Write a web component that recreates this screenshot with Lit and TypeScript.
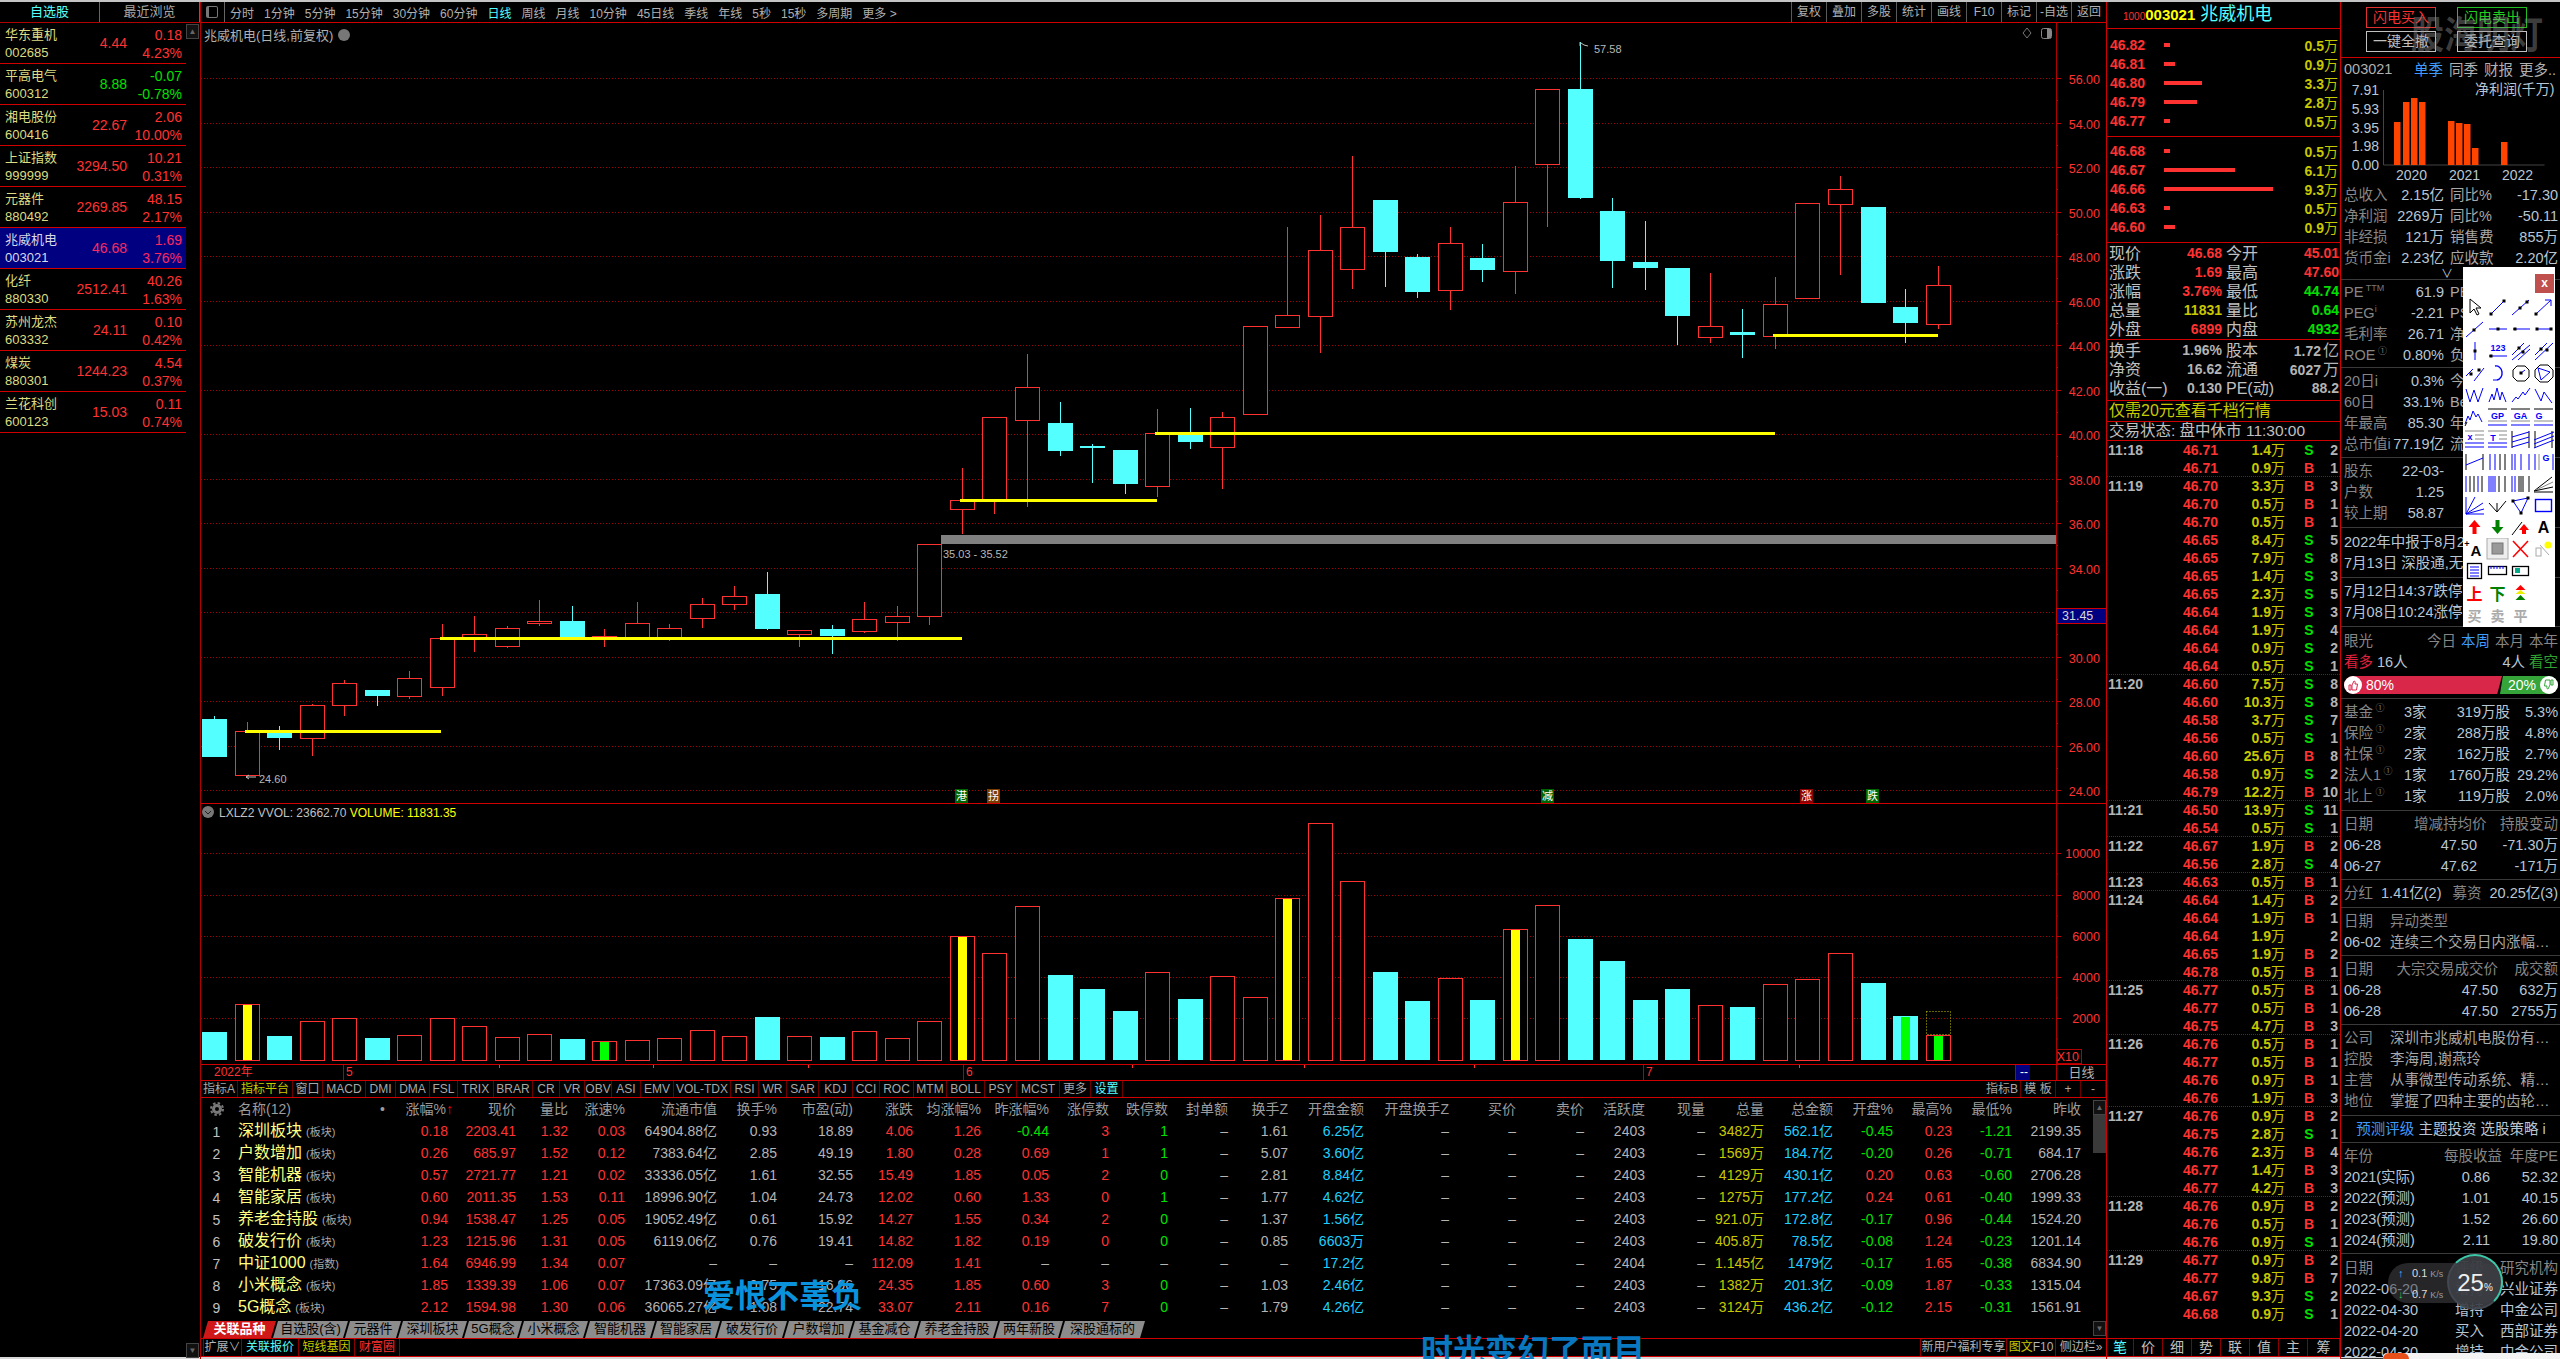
import { LitElement, html, css, svg } from "lit";
import { customElement } from "lit/decorators.js";

const RED = "#ff3232";
const CYAN = "#54ffff";

// kind, body top, body bottom, wick top, wick bottom (page pixels)
type Candle = ["r" | "c", number, number, number, number];
const candles: Candle[] = [
  ["c", 719, 757, 716, 757], ["r", 731, 775, 722, 775], ["c", 733, 738, 726, 750], ["r", 705, 738, 704, 756],
  ["r", 683, 705, 680, 716], ["c", 690, 696, 690, 706], ["r", 678, 696, 671, 699], ["r", 638, 687, 624, 696],
  ["r", 634, 638, 616, 652], ["r", 628, 646, 626, 648], ["r", 621, 623, 600, 626], ["c", 621, 638, 606, 638],
  ["r", 636, 638, 629, 647], ["r", 623, 637, 602, 637], ["r", 628, 637, 624, 641], ["r", 604, 618, 598, 628],
  ["r", 596, 604, 586, 610], ["c", 594, 629, 572, 630], ["r", 630, 634, 630, 647], ["c", 629, 636, 625, 654],
  ["r", 619, 631, 602, 633], ["r", 616, 622, 606, 641], ["r", 544, 616, 544, 625], ["r", 500, 509, 468, 534],
  ["r", 417, 500, 417, 514], ["r", 387, 420, 354, 507], ["c", 423, 451, 402, 456], ["c", 446, 447, 444, 483],
  ["c", 450, 484, 450, 494], ["r", 433, 486, 409, 497], ["c", 433, 442, 408, 449], ["r", 417, 447, 412, 489],
  ["r", 326, 414, 326, 414], ["r", 315, 327, 227, 327], ["r", 250, 316, 215, 353], ["r", 227, 269, 156, 289],
  ["c", 200, 252, 200, 287], ["c", 257, 292, 254, 298], ["r", 243, 290, 227, 310], ["c", 258, 270, 244, 282],
  ["r", 202, 271, 166, 294], ["r", 89, 164, 89, 227], ["c", 89, 198, 42, 199], ["c", 211, 261, 198, 288],
  ["c", 262, 268, 221, 290], ["c", 268, 316, 268, 345], ["r", 326, 337, 273, 343], ["c", 332, 335, 309, 358],
  ["r", 304, 336, 277, 349], ["r", 203, 298, 203, 298], ["r", 189, 204, 176, 275], ["c", 207, 303, 207, 303],
  ["c", 307, 323, 289, 343], ["r", 285, 324, 266, 329],
];

// top of each volume bar, same order as the candles
const volTops = [
  1032, 1004, 1036, 1021, 1018, 1038, 1035, 1018, 1026, 1037, 1034, 1039, 1041, 1040, 1038, 1030, 1036, 1017,
  1036, 1037, 1031, 1038, 1021, 936, 953, 906, 975, 989, 1011, 972, 999, 976, 997, 898, 823, 881, 972, 1001,
  978, 1000, 929, 905, 939, 961, 1000, 989, 1005, 1007, 984, 979, 953, 983, 1016, 1035,
];
const volStripe: Record<number, string> = { 1: "#ffff00", 12: "#00ff00", 23: "#ffff00", 33: "#ffff00", 40: "#ffff00", 52: "#00ff00", 53: "#00ff00" };

const yellowLines = [
  [245, 441, 731], [440, 962, 638], [960, 1157, 500], [1155, 1775, 433], [1773, 1938, 335],
];
const prices = [56, 54, 52, 50, 48, 46, 44, 42, 40, 38, 36, 34, 32, 30, 28, 26, 24];
const priceY = (p: number) => Math.round(78 + (56 - p) * 22.25) + 0.5;
const barX = (i: number) => Math.round(202 + 32.52 * i);

const chartSvg = svg`
  ${prices.map((p) => svg`
    <line class="grid" x1="201" x2="2055" y1=${priceY(p)} y2=${priceY(p)}></line>
    <line class="tick" x1="2056" x2="2061" y1=${priceY(p)} y2=${priceY(p)}></line>
    <line class="tick" x1="2056" x2="2058" y1=${priceY(p) + 22} y2=${priceY(p) + 22}></line>
    ${p === 32 ? "" : svg`<text class="ax" x="2100" y=${priceY(p) + 5}>${p}.00</text>`}`)}
  <rect x="941" y="535" width="1115" height="9" fill="#808080"></rect>
  ${candles.map(([k, t, b, wt, wb], i) => {
    const x = barX(i);
    const cx = x + 12.5;
    const col = k === "r" ? RED : CYAN;
    return svg`
      <line x1=${cx} x2=${cx} y1=${wt} y2=${wb} stroke=${col}></line>
      ${k === "r"
        ? svg`<rect x=${x + 0.5} y=${t + 0.5} width="24" height=${b - t} fill="#000" stroke=${RED}></rect>`
        : svg`<rect x=${x} y=${t} width="25" height=${Math.max(b - t, 2)} fill=${CYAN}></rect>`}`;
  })}
  ${yellowLines.map(([a, b, y]) => svg`<rect x=${a} y=${y - 1} width=${b - a} height="3" fill="#ffff00"></rect>`)}
  <text class="note" x="943" y="558">35.03 - 35.52</text>
  <text class="note" x="1594" y="53">57.58</text>
  <path d="M1580 42v4M1581 43l3 2 4 1" stroke="#c0c0c0" fill="none"></path>
  <text class="note" x="259" y="783">24.60</text>
  <path d="M256 777h-10M246 777l3-2M246 777l3 2" stroke="#c0c0c0" fill="none"></path>
  ${([[955, "港", "#006400"], [987, "拐", "#7a3c00"], [1541, "减", "#006400"], [1800, "涨", "#8b0000"], [1866, "跌", "#006400"]] as [number, string, string][]).map(
    ([x, t, c]) => svg`<rect x=${x} y="789" width="13" height="14" fill=${c}></rect><text class="tag" x=${x + 6.5} y="800">${t}</text>`
  )}`;

const volSvg = svg`
  ${[853, 895, 936, 977, 1018].map((y, i) => svg`
    <line class="grid" x1="201" x2="2055" y1=${y + 0.5} y2=${y + 0.5}></line>
    <line class="tick" x1="2056" x2="2061" y1=${y + 0.5} y2=${y + 0.5}></line>
    <line class="tick" x1="2056" x2="2058" y1=${y + 21} y2=${y + 21}></line>
    <text class="ax" x="2100" y=${y + 5}>${10000 - i * 2000}</text>`)}
  ${volTops.map((t, i) => {
    const x = barX(i);
    const h = 1060 - t;
    const stripe = volStripe[i];
    return svg`
      ${candles[i][0] === "c"
        ? svg`<rect x=${x} y=${t} width="25" height=${h} fill=${CYAN}></rect>`
        : svg`<rect x=${x + 0.5} y=${t + 0.5} width="24" height=${h} fill="#000" stroke=${RED}></rect>`}
      ${stripe ? svg`<rect x=${x + 8} y=${t + 1} width="9" height=${h - 1} fill=${stripe}></rect>` : ""}`;
  })}
  <rect x=${barX(53) + 0.5} y="1011.5" width="24" height="23" fill="none" stroke="#c8c800" stroke-dasharray="1 2"></rect>
  <circle cx="208" cy="812" r="6" fill="#777"></circle>
  <path d="M205 811l3 3 3-3" stroke="#222" fill="none"></path>
  <text class="lab" x="219" y="817"><tspan fill="#c0c0c0">LXLZ2 VVOL: 23662.70 </tspan><tspan fill="#ffff00">VOLUME: 11831.35</tspan></text>
  <rect x="2057.5" y="1049.5" width="24" height="14" fill="none" stroke="#b00000"></rect>
  <text class="ax" x="2079" y="1061">X10</text>`;

const sideRows = [
  ["华东重机", "002685", "4.44", "0.18", "4.23%", "r"],
  ["平高电气", "600312", "8.88", "-0.07", "-0.78%", "g"],
  ["湘电股份", "600416", "22.67", "2.06", "10.00%", "r"],
  ["上证指数", "999999", "3294.50", "10.21", "0.31%", "r"],
  ["元器件", "880492", "2269.85", "48.15", "2.17%", "r"],
  ["兆威机电", "003021", "46.68", "1.69", "3.76%", "s"],
  ["化纤", "880330", "2512.41", "40.26", "1.63%", "r"],
  ["苏州龙杰", "603332", "24.11", "0.10", "0.42%", "r"],
  ["煤炭", "880301", "1244.23", "4.54", "0.37%", "r"],
  ["兰花科创", "600123", "15.03", "0.11", "0.74%", "r"],
];

const periods = ["分时", "1分钟", "5分钟", "15分钟", "30分钟", "60分钟", "日线", "周线", "月线", "10分钟", "45日线", "季线", "年线", "5秒", "15秒", "多周期", "更多 >"];
const tools = ["复权", "叠加", "多股", "统计", "画线", "F10", "标记", "-自选", "返回"];
const indicators: [string, number, string?][] = [
  ["指标A", 37], ["指标平台", 55, "y"], ["窗口", 30], ["MACD", 43], ["DMI", 30], ["DMA", 34], ["FSL", 28], ["TRIX", 36], ["BRAR", 39],
  ["CR", 27], ["VR", 25], ["OBV", 27], ["ASI", 29], ["EMV", 33], ["VOL-TDX", 57], ["RSI", 28], ["WR", 28], ["SAR", 32], ["KDJ", 34],
  ["CCI", 27], ["ROC", 34], ["MTM", 33], ["BOLL", 38], ["PSY", 32], ["MCST", 43], ["更多", 31], ["设置", 32, "cy"],
];
const indRight: [string, number][] = [["指标B", 37], ["模 板", 35], ["+", 25], ["-", 25]];
const relTabs: [string, number][] = [
  ["自选股(含)", 75], ["元器件", 56], ["深圳板块", 69], ["5G概念", 58], ["小米概念", 69], ["智能机器", 70], ["智能家居", 68], ["破发行价", 70],
  ["户数增加", 69], ["基金减仓", 69], ["养老金持股", 82], ["两年新股", 68], ["深股通标的", 85],
];

const headers = ["涨幅%", "现价", "量比", "涨速%", "流通市值", "换手%", "市盈(动)", "涨跌", "均涨幅%", "昨涨幅%", "涨停数", "跌停数", "封单额", "换手Z", "开盘金额", "开盘换手Z", "买价", "卖价", "活跃度", "现量", "总量", "总金额", "开盘%", "最高%", "最低%", "昨收"];
// colour per column: s = by sign (red/green), r = red, w = grey, g = green, c = cyan, y = yellow
const colKind = "srsswwwsssrgwwcwwwwwycsssw";
const stockRows: [string, string, string[]][] = [
  ["深圳板块", "(板块)", "0.18 2203.41 1.32 0.03 64904.88亿 0.93 18.89 4.06 1.26 -0.44 3 1 - 1.61 6.25亿 - - - 2403 - 3482万 562.1亿 -0.45 0.23 -1.21 2199.35".split(" ")],
  ["户数增加", "(板块)", "0.26 685.97 1.52 0.12 7383.64亿 2.85 49.19 1.80 0.28 0.69 1 1 - 5.07 3.60亿 - - - 2403 - 1569万 184.7亿 -0.20 0.26 -0.71 684.17".split(" ")],
  ["智能机器", "(板块)", "0.57 2721.77 1.21 0.02 33336.05亿 1.61 32.55 15.49 1.85 0.05 2 0 - 2.81 8.84亿 - - - 2403 - 4129万 430.1亿 0.20 0.63 -0.60 2706.28".split(" ")],
  ["智能家居", "(板块)", "0.60 2011.35 1.53 0.11 18996.90亿 1.04 24.73 12.02 0.60 1.33 0 1 - 1.77 4.62亿 - - - 2403 - 1275万 177.2亿 0.24 0.61 -0.40 1999.33".split(" ")],
  ["养老金持股", "(板块)", "0.94 1538.47 1.25 0.05 19052.49亿 0.61 15.92 14.27 1.55 0.34 2 0 - 1.37 1.56亿 - - - 2403 - 921.0万 172.8亿 -0.17 0.96 -0.44 1524.20".split(" ")],
  ["破发行价", "(板块)", "1.23 1215.96 1.31 0.05 6119.06亿 0.76 19.41 14.82 1.82 0.19 0 0 - 0.85 6603万 - - - 2403 - 405.8万 78.5亿 -0.08 1.24 -0.23 1201.14".split(" ")],
  ["中证1000", "(指数)", "1.64 6946.99 1.34 0.07 - - - 112.09 1.41 - - - - - 17.2亿 - - - 2404 - 1.145亿 1479亿 -0.17 1.65 -0.38 6834.90".split(" ")],
  ["小米概念", "(板块)", "1.85 1339.39 1.06 0.07 17363.09亿 0.75 16.96 24.35 1.85 0.60 3 0 - 1.03 2.46亿 - - - 2403 - 1382万 201.3亿 -0.09 1.87 -0.33 1315.04".split(" ")],
  ["5G概念", "(板块)", "2.12 1594.98 1.30 0.06 36065.27亿 1.08 22.74 33.07 2.11 0.16 7 0 - 1.79 4.26亿 - - - 2403 - 3124万 436.2亿 -0.12 2.15 -0.31 1561.91".split(" ")],
];

const asks = [["46.82", 6, "0.5万"], ["46.81", 11, "0.9万"], ["46.80", 38, "3.3万"], ["46.79", 33, "2.8万"], ["46.77", 6, "0.5万"]] as [string, number, string][];
const bids = [["46.68", 6, "0.5万"], ["46.67", 71, "6.1万"], ["46.66", 109, "9.3万"], ["46.63", 6, "0.5万"], ["46.60", 11, "0.9万"]] as [string, number, string][];
const quotes = [
  ["现价", "46.68", "r", "今开", "45.01", "r"],
  ["涨跌", "1.69", "r", "最高", "47.60", "r"],
  ["涨幅", "3.76%", "r", "最低", "44.74", "g"],
  ["总量", "11831", "y", "量比", "0.64", "g"],
  ["外盘", "6899", "r", "内盘", "4932", "g"],
];
const capital = [
  ["换手", "1.96%", "w", "股本", "1.72亿", "w"],
  ["净资", "16.62", "w", "流通", "6027万", "w"],
  ["收益(一)", "0.130", "w", "PE(动)", "88.2", "w"],
];

// time|price|vol|side|count, "." ends a minute with a dotted rule
const ticks = `11:18 46.71 1.4 S 2,- 46.71 0.9 B 1 .,11:19 46.70 3.3 B 3,- 46.70 0.5 B 1,- 46.70 0.5 B 1,- 46.65 8.4 S 5,- 46.65 7.9 S 8,- 46.65 1.4 S 3,- 46.65 2.3 S 5,- 46.64 1.9 S 3,- 46.64 1.9 S 4,- 46.64 0.9 S 2,- 46.64 0.5 S 1 .,11:20 46.60 7.5 S 8,- 46.60 10.3 S 8,- 46.58 3.7 S 7,- 46.56 0.5 S 1,- 46.60 25.6 B 8,- 46.58 0.9 S 2,- 46.79 12.2 B 10 .,11:21 46.50 13.9 S 11,- 46.54 0.5 S 1 .,11:22 46.67 1.9 B 2,- 46.56 2.8 S 4 .,11:23 46.63 0.5 B 1 .,11:24 46.64 1.4 B 2,- 46.64 1.9 B 1,- 46.64 1.9 _ 2,- 46.65 1.9 B 2,- 46.78 0.5 B 1 .,11:25 46.77 0.5 B 1,- 46.77 0.5 B 1,- 46.75 4.7 B 3 .,11:26 46.76 0.5 B 1,- 46.77 0.5 B 1,- 46.76 0.9 B 1,- 46.76 1.9 B 3 .,11:27 46.76 0.9 B 2,- 46.75 2.8 S 1,- 46.76 2.3 B 4,- 46.77 1.4 B 3,- 46.77 4.2 B 3 .,11:28 46.76 0.9 B 2,- 46.76 0.5 B 1,- 46.76 0.9 S 1 .,11:29 46.77 0.9 B 2,- 46.77 9.8 B 7,- 46.67 9.3 S 2,- 46.68 0.9 S 1`
  .split(",")
  .map((r) => r.split(" "));

// drawing toolbox icons, each in a 23x22 box
const B = "#0000ff";
const K = "#000";
const ln = (a: number, b: number, c: number, d: number, col = B) => svg`<line x1=${a} y1=${b} x2=${c} y2=${d} stroke=${col}></line>`;
const dt = (x: number, y: number) => svg`<rect x=${x - 1.5} y=${y - 1.5} width="3" height="3" fill=${K}></rect>`;
const pl = (p: string, col = B) => svg`<polyline points=${p} fill="none" stroke=${col}></polyline>`;
const tx = (x: number, y: number, t: string, col = B, size = 9) => svg`<text x=${x} y=${y} fill=${col} font-size=${size} font-weight="700" text-anchor="middle">${t}</text>`;
const toolIcons = [
  svg`<path d="M7 3v14l4-4 3 6 2-1-3-6h5z" fill="#fff" stroke="#000"></path>`,
  svg`${ln(5, 18, 18, 5)}${dt(5, 18)}${dt(18, 5)}`,
  svg`${ln(3, 19, 20, 4)}${dt(11, 12)}${dt(18, 6)}`,
  svg`${ln(4, 18, 19, 4)}${pl("13,4 19,4 19,10")}${dt(4, 18)}`,
  svg`${ln(3, 19, 20, 4)}${dt(11, 12)}`,
  svg`${ln(3, 11, 21, 11)}${dt(12, 11)}`,
  svg`${ln(4, 11, 21, 11)}${dt(6, 11)}`,
  svg`${ln(4, 11, 20, 11)}${dt(5, 11)}${dt(19, 11)}`,
  svg`${ln(12, 2, 12, 20)}${dt(12, 11)}`,
  svg`${tx(12, 11, "123")}${ln(3, 16, 21, 16)}${dt(5, 16)}`,
  svg`${ln(3, 15, 15, 3)}${ln(3, 20, 21, 5)}${ln(9, 20, 21, 9)}${dt(10, 8)}${dt(14, 12)}`,
  svg`${ln(3, 15, 15, 3)}${ln(3, 20, 21, 3)}${dt(9, 9)}${dt(15, 10)}`,
  svg`${ln(3, 14, 10, 7)}${ln(11, 19, 21, 6)}${dt(8, 12)}${dt(16, 8)}`,
  svg`<path d="M9 4a6 7 0 0 1 2 14" fill="none" stroke=${B} stroke-width="1.4"></path>${ln(7, 18, 11, 18)}`,
  svg`<polygon points="8,4 16,4 20,8 20,15 16,19 8,19 4,15 4,8" fill="none" stroke=${K}></polygon>${ln(12, 11, 16, 8)}${dt(12, 11)}`,
  svg`<polygon points="8,3 16,3 21,8 21,15 16,20 8,20 3,15 3,8" fill="none" stroke=${K}></polygon><polygon points="6,6 18,10 9,18" fill="none" stroke=${B}></polygon>`,
  pl("3,5 7,18 11,6 15,18 20,4"),
  pl("3,18 6,10 8,16 11,4 14,16 16,8 20,18"),
  pl("3,18 7,13 9,15 14,8 16,11 21,4"),
  pl("3,5 9,17 12,8 20,19"),
  svg`${pl("2,18 5,10 7,14 10,5 13,11 15,8 19,16")}${ln(2, 20, 4, 16, K)}`,
  svg`${ln(2, 3, 21, 3, K)}${tx(11.5, 13, "GP")}${ln(2, 15, 21, 15, "#888")}${ln(2, 19, 21, 19)}`,
  svg`${ln(2, 3, 21, 3, K)}${tx(11.5, 13, "GA")}${ln(2, 15, 21, 15, "#888")}${ln(2, 19, 21, 19)}`,
  svg`${ln(2, 3, 21, 3, K)}${tx(7, 13, "G")}${ln(2, 15, 21, 15, "#888")}${ln(2, 19, 21, 19)}`,
  svg`${ln(2, 3, 21, 3, "#888")}${ln(12, 7, 21, 7, "#888")}${tx(7, 12, "x")}${ln(12, 11, 21, 11, "#888")}${ln(2, 15, 21, 15)}${ln(2, 19, 21, 19)}`,
  svg`${ln(2, 3, 21, 3, "#888")}${tx(7, 13, "T")}${ln(13, 7, 21, 7, "#888")}${ln(13, 11, 21, 11, "#888")}${ln(2, 15, 21, 15)}${ln(2, 19, 21, 19)}`,
  svg`${ln(3, 3, 3, 20, K)}${ln(20, 3, 20, 20, K)}${ln(3, 9, 20, 4)}${ln(3, 14, 20, 9)}${ln(3, 19, 20, 14)}`,
  svg`${ln(3, 3, 3, 20, K)}${ln(20, 3, 20, 20, K)}${ln(2, 12, 22, 4)}${ln(2, 16, 22, 8)}${ln(2, 20, 22, 12)}`,
  svg`${ln(3, 4, 3, 20, K)}${ln(20, 4, 20, 20, K)}${ln(3, 15, 20, 8)}`,
  svg`${ln(4, 4, 4, 20)}${ln(9, 4, 9, 20)}${ln(14, 4, 14, 20, K)}${ln(19, 4, 19, 20, K)}`,
  svg`${ln(3, 4, 3, 20)}${ln(6, 4, 6, 20)}${ln(12, 4, 12, 20)}${ln(20, 4, 20, 20)}`,
  svg`${ln(3, 4, 3, 20)}${ln(7, 4, 7, 20, "#888")}${tx(14, 11, "G")}${ln(21, 4, 21, 20)}`,
  svg`${ln(3, 4, 3, 20)}${ln(7, 4, 7, 20, K)}${ln(11, 4, 11, 20, K)}${ln(15, 4, 15, 20)}${ln(19, 4, 19, 20, K)}`,
  svg`${[3, 5, 7, 9].map((x) => ln(x, 4, x, 20))}${ln(13, 4, 13, 20, K)}${ln(19, 4, 19, 20, K)}`,
  svg`${ln(3, 4, 3, 20)}${ln(6, 4, 6, 20)}${[10, 12, 14].map((x) => ln(x, 4, x, 20, K))}${ln(20, 4, 20, 20, K)}`,
  svg`${ln(2, 19, 20, 5, K)}${ln(2, 19, 21, 10, "#888")}${ln(2, 19, 21, 15, K)}${ln(2, 20, 21, 20, K)}`,
  svg`${ln(3, 3, 3, 20)}${ln(3, 20, 21, 20)}${ln(3, 20, 12, 3)}${ln(3, 20, 20, 9)}${ln(3, 20, 21, 15)}`,
  svg`${pl("3,9 11,18 20,7", K)}${ln(11, 18, 11, 9, K)}`,
  svg`<polygon points="4,7 19,4 12,19" fill="none" stroke=${B}></polygon>${dt(4, 7)}${dt(19, 4)}${dt(12, 19)}`,
  svg`<rect x="3.5" y="5.5" width="16" height="12" fill="none" stroke=${B} stroke-width="1.4"></rect>`,
  svg`<path d="M11.5 4l6 7h-4v7h-4v-7h-4z" fill="#f00"></path>`,
  svg`<path d="M9.5 4h4v7h4l-6 7-6-7h4z" fill="#008000"></path>`,
  svg`${ln(3, 19, 13, 6, K)}<path d="M15 8l5 6h-3v4h-4v-4h-3z" fill="#f00"></path>`,
  tx(11.5, 17, "A", K, 16),
  svg`${tx(13, 18, "A", K, 15)}${tx(4, 9, "+", K, 9)}`,
  svg`<rect x="1" y="0" width="21" height="21" fill="#eee" stroke="#aaa"></rect><rect x="6" y="5" width="11" height="11" fill="#999" stroke="#777"></rect>`,
  svg`<path d="M4 3l15 16M19 3L4 19" stroke="#f00" stroke-width="1.6"></path>`,
  svg`<rect x="4" y="10" width="5" height="8" fill="#fff" stroke="#aaa"></rect>${ln(8, 7, 17, 17, "#aaa")}<circle cx="16" cy="7" r="3.5" fill="#ff0"></circle>`,
  svg`<rect x="4.5" y="3.5" width="14" height="15" fill="none" stroke=${K} stroke-width="1.3"></rect>${[7, 10, 13, 16].map((y) => ln(7, y, 16, y))}`,
  svg`<rect x="2.5" y="6.5" width="18" height="8" fill="none" stroke=${K} stroke-width="1.3"></rect>${[5, 8, 11, 14, 17].map((x) => ln(x, 6, x, 9, B))}`,
  svg`<rect x="3.5" y="6.5" width="16" height="9" fill="none" stroke=${K} stroke-width="1.3"></rect><rect x="6" y="8" width="5" height="5" fill="#0a8"></rect>`,
  svg``,
  tx(11.5, 18, "上", "#f00", 16),
  tx(11.5, 18, "下", "#008000", 16),
  svg`<path d="M11.5 3l5 5h-10z" fill="#f00"></path><path d="M11.5 8l5 4h-10z" fill="#ee0"></path><path d="M11.5 13l5 5h-10z" fill="#008000"></path>`,
  svg``,
  tx(11.5, 17, "买", "#aaa", 14),
  tx(11.5, 17, "卖", "#aaa", 14),
  tx(11.5, 17, "平", "#aaa", 14),
  svg``,
];

@customElement("app-root")
export class AppRoot extends LitElement {
  static styles = css`
    :host {
      --red: #ff3232;
      --cyan: #54ffff;
      --line: #b00000;
      --rule: #d00000;
      display: block;
      position: relative;
      width: 2560px;
      height: 1359px;
      overflow: hidden;
      background: #000;
      color: #c0c0c0;
      font: 14px "Liberation Sans", "Noto Sans CJK SC", sans-serif;
    }
    * { box-sizing: border-box; }
    .edge { height: 2px; background: #c4c4c4; }
    .app { display: grid; grid-template-columns: 200px 1906px 235px 219px; height: 1355px; }
    .foot { height: 2px; background: #d8d8d8; }

    /* watch list */
    .side { display: flex; flex-direction: column; }
    .side-tabs { display: flex; height: 21px; border-bottom: 1px solid var(--line); }
    .side-tabs div { width: 100px; text-align: center; line-height: 20px; font-size: 13px; color: #a8a8a8; border-right: 1px solid #666; }
    .side-tabs .on { color: var(--cyan); }
    .side-body { display: grid; grid-template-columns: 186px 14px; flex: 1; }
    .side-scroll { display: flex; flex-direction: column; justify-content: space-between; padding: 1px 0; }
    .up, .down { width: 13px; height: 15px; border: 1px solid #444; background: #111; color: #666; font-size: 8px; line-height: 13px; text-align: center; flex: none; }
    .srow { display: grid; grid-template-columns: 70px 52px 55px; height: 41px; padding-left: 5px; border-bottom: 1px solid var(--rule); }
    .srow.sel { background: #000080; }
    .srow .name { font-size: 13px; line-height: 18px; padding-top: 3px; color: #dcdc82; white-space: nowrap; }
    .srow .code { font-size: 13px; line-height: 17px; color: #dcdc82; }
    .srow.sel .code, .srow.sel .name { color: #d8d8e8; }
    .srow .pr { font-size: 14px; text-align: right; align-self: center; }
    .srow .ch { font-size: 14px; line-height: 18px; padding-top: 3px; text-align: right; }
    .srow.sel .pr, .srow.sel .ch { color: #ff2860; }
    .r { color: var(--red); }
    .g { color: #00e000; }
    .w { color: #b4b4b4; }
    .y { color: #c8c800; }
    .c { color: #1fd0ff; }
    .cy { color: var(--cyan); }

    /* centre */
    .center { display: flex; flex-direction: column; border-left: 1px solid var(--line); min-width: 0; }
    .toolbar { display: flex; height: 21px; border-bottom: 1px solid var(--rule); align-items: center; font-size: 12px; color: #b0b0b0; padding-left: 5px; white-space: nowrap; }
    .panel-ico { width: 12px; height: 12px; border: 1px solid #777; border-left-width: 3px; border-radius: 2px; margin-right: 6px; }
    .periods { display: flex; gap: 10px; border-left: 1px solid #666; height: 100%; align-items: center; padding-left: 5px; }
    .periods .on { color: var(--cyan); }
    .tools { margin-left: auto; display: flex; height: 100%; }
    .tools div { width: 35px; text-align: center; line-height: 20px; border-left: 1px solid #5a5a5a; }
    .pane { height: 781px; border-bottom: 1px solid var(--rule); position: relative; }
    .pane.vol { height: 261px; }
    svg.plot { display: block; width: 1905px; height: 100%; }
    .grid { stroke: #a00000; stroke-dasharray: 1 2; }
    .tick { stroke: #c00000; }
    .ax { fill: var(--red); font-size: 12.5px; text-anchor: end; }
    .note { fill: #b8b8b8; font-size: 11px; }
    .tag { fill: #fff; font-size: 11px; text-anchor: middle; }
    .lab { font-size: 12px; }
    .axis-line { stroke: var(--line); }
    .pane-title { position: absolute; left: 3px; top: 2px; font-size: 13px; color: #b0b0b0; display: flex; align-items: center; gap: 5px; }
    .pane-title i { width: 12px; height: 12px; border-radius: 50%; background: #777; }
    .dates { position: relative; height: 16px; border-bottom: 1px solid var(--rule); display: flex; font-size: 12px; color: var(--red); line-height: 15px; }
    .dates .d { border-left: 1px solid var(--line); padding-left: 2px; flex: none; }
    .dates .y0 { width: 142px; padding-left: 13px; border: 0; }
    .dates .m5 { width: 620px; }
    .dates .m6 { width: 680px; }
    .dates .m7 { width: 372px; }
    .dates .cur { width: 15px; background: #000080; color: #fff; text-align: center; }
    .dates .pad { width: 26px; }
    .dates .dl { width: 50px; border-left: 1px solid var(--line); color: #b0b0b0; text-align: center; font-size: 13px; }
    .date-ticks { position: absolute; left: 0; top: 0; }
    .inds { height: 17px; border-bottom: 1px solid var(--rule); display: flex; font-size: 12px; color: #a8a8a8; line-height: 16px; white-space: nowrap; }
    .inds div { text-align: center; border-right: 1px solid #6a0000; flex: none; overflow: hidden; }
    .inds .gap { flex: 1; border: 0; }
    .inds .y { color: #c8c800; }
    .inds .cy { color: var(--cyan); }
    .tbl-wrap { height: 241px; display: flex; border-bottom: 1px solid var(--rule); }
    .tbl-col { width: 1892px; flex: none; }
    .tbl { height: 223px; }
    .tr { display: grid; height: 22px; line-height: 22px; font-size: 14px; white-space: nowrap;
      grid-template-columns: 31px 158px 58px 68px 52px 57px 92px 60px 76px 60px 68px 68px 60px 59px 60px 60px 76px 85px 67px 68px 61px 60px 59px 69px 60px 59px 60px 69px; }
    .tr > div { text-align: right; }
    .tr > .n { text-align: center; color: #c0c0c0; display: flex; align-items: center; justify-content: center; }
    .tr > .nm { text-align: left; padding-left: 6px; color: #ffff80; font-size: 16px; }
    .nm small { font-size: 11px; color: #a8a8a8; margin-left: 4px; }
    .th { color: #9c9c9c; }
    .th > .nm { font-size: 14px; color: #9c9c9c; display: flex; justify-content: space-between; padding-right: 5px; }
    .arr { color: #f00; margin-right: -5px; }
    .scr { width: 13px; display: flex; flex-direction: column; margin-top: 2px; padding-bottom: 2px; }
    .scr .thumb { height: 38px; background: #3a3a3a; flex: none; }
    .scr .sp { flex: 1; }
    .rels { height: 17px; display: flex; padding-left: 2px; font-size: 13px; line-height: 16px; white-space: nowrap; }
    .rels div { flex: none; text-align: center; background: #8c8c8c; color: #000; margin-right: -3px;
      clip-path: polygon(5px 0, 100% 0, calc(100% - 5px) 100%, 0 100%); }
    .rels .on { background: #d01818; color: #fff; font-weight: 700; }
    .bar { height: 18px; border-bottom: 1px solid var(--rule); display: flex; font-size: 12px; line-height: 17px; white-space: nowrap; }
    .bar div { flex: none; text-align: center; border-right: 1px solid #8a0000; }
    .bar .fold { width: 39px; margin-left: 2px; border-left: 1px solid #8a0000; }
    .bar .a1 { width: 57px; color: var(--cyan); }
    .bar .a2 { width: 56px; }
    .bar .a3 { width: 45px; }
    .bar .gap { flex: 1; border: 0; }
    .bar .b1 { width: 87px; border-left: 1px solid #8a0000; }
    .bar .b2 { width: 49px; }
    .bar .b3 { width: 50px; border: 0; }

    /* quote column */
    .mid { display: grid; border-left: 1px solid var(--rule); border-right: 1px solid var(--rule); overflow: hidden;
      grid-template-rows: 27px 108px 106px 97px 61px 21px 19px 898px 18px; }
    .mid > * { border-bottom: 1px solid var(--rule); min-height: 0; }
    .mhead { display: flex; align-items: baseline; padding-left: 16px; line-height: 25px; }
    .mhead small { font-size: 10px; color: var(--red); }
    .mhead b { color: #ffff00; font-size: 15px; margin: 0 5px 0 0; }
    .mhead span { color: var(--cyan); font-size: 18px; }
    .book { padding-top: 6px; }
    .book.b2 { padding-top: 4px; }
    .lvl { display: grid; grid-template-columns: 54px 1fr auto; align-items: center; height: 19px; padding: 0 2px 0 3px; font-weight: 700; }
    .lvl i { display: block; height: 4px; background: var(--red); }
    .quo { padding-top: 1px; }
    .qr { display: grid; grid-template-columns: 40px 75px 50px 1fr; height: 19px; line-height: 19px; padding-right: 1px; white-space: nowrap; }
    .qr span { font-size: 16px; padding-left: 2px; }
    .qr b { text-align: right; font-size: 14px; }
    .qr span + b + span { padding-left: 4px; }
    .u { font-weight: 400; }
    .ad { color: #c8c800; font-size: 16px; line-height: 19px; white-space: nowrap; padding-left: 2px; }
    .stat { font-size: 15.5px; line-height: 17px; white-space: nowrap; padding-left: 2px; }
    .tk { display: grid; grid-template-columns: 60px 51px 67px 34px 19px; height: 18px; line-height: 18px; font-weight: 700; white-space: nowrap; }
    .tk.end { border-bottom: 1px dotted #b00000; }
    .tk > :nth-child(n + 2) { text-align: right; }
    .tk > .side-flag { text-align: center; padding-left: 14px; font-size: 14px; }
    .tk .tm { padding-left: 1px; }
    .tabs { display: grid; grid-template-columns: 27px 29px 29px 29px 29px 29px 29px 1fr; font-size: 14px; line-height: 17px; }
    .tabs div { text-align: center; border-right: 1px solid #8a0000; }
    .tabs .on { color: var(--cyan); }

    /* finance column */
    .info { display: grid; overflow: hidden; height: 1357px; font-size: 14.5px; color: #b8c6d4;
      grid-template-rows: 56px 21px 106px 95px 88px 90px 70px 50px 49px 72px 112px 69px 28px 48px 69px 91px 27px 111px 105px; }
    .sec { display: flex; flex-direction: column; justify-content: center; border-bottom: 1px solid #3a3a3a; padding: 0 3px; min-height: 0; white-space: nowrap; }
    .sec.top { justify-content: flex-start; }
    .btns { display: grid; grid-template-columns: 70px 70px; justify-content: space-between; align-content: start; padding: 5px 34px 0 25px; gap: 3px 20px; border-bottom: 1px solid var(--rule); font-size: 14px; }
    .btns div { height: 21px; line-height: 19px; text-align: center; border: 1px solid #c0c0c0; color: #c0c0c0; }
    .btns .buy { border-color: #e03030; color: #ff3030; }
    .btns .sell { border-color: #20c020; color: #20d020; }
    .hd { flex-direction: row; justify-content: space-between; align-items: center; border: 0; padding-right: 5px; color: #b0b0b0; }
    .hd a { color: #3f9cff; }
    .hd nav { display: flex; gap: 6px; }
    .fin { padding: 0; border: 0; }
    .fin svg { display: block; }
    .fin text { font-size: 14px; fill: #b8c6d4; }
    .m { display: grid; grid-template-columns: 42px 58px 48px 1fr; height: 21px; line-height: 21px; }
    .lb { color: #868686; }
    .m .v { text-align: right; }
    .m .lb2 { padding-left: 6px; color: #a8a8a8; }
    .more { height: 11px; line-height: 10px; text-align: center; font-size: 12px; padding-right: 8px; }
    .ln { height: 21px; line-height: 21px; overflow: hidden; }
    .ln.mid-t { text-align: center; }
    .ln a { color: #3f9cff; }
    .sb { display: flex; justify-content: space-between; }
    .sb .bl { color: #3f9cff; }
    sup { font-size: 9px; line-height: 0; color: #777; }
    .eye { display: flex; gap: 5px; }
    .bull { color: #e0203f; }
    .bear { color: #30a030; }
    .vote { display: flex; height: 18px; margin-top: 3px; align-items: stretch; color: #fff; font-size: 14px; line-height: 18px; }
    .vote .up-b { flex: 158px 0 0; background: #d9274a; border-radius: 9px 0 0 9px; display: flex; gap: 4px; clip-path: polygon(0 0, 100% 0, 97% 100%, 0 100%); }
    .vote .dn-b { flex: 1; background: #35a53a; border-radius: 0 9px 9px 0; display: flex; justify-content: flex-end; gap: 4px; margin-left: -2px; clip-path: polygon(5% 0, 100% 0, 100% 100%, 0 100%); padding-left: 8px; }
    .vote svg { width: 18px; height: 18px; flex: none; }
    .h4 { display: grid; grid-template-columns: 60px 40px 66px 1fr; height: 21px; line-height: 21px; }
    .h4 > :nth-child(n + 3) { text-align: right; }
    .c3 { display: grid; height: 21px; line-height: 21px; }
    .c3 > :nth-child(n + 2) { text-align: right; }
    .c3.hold { grid-template-columns: 70px 63px 1fr; }
    .c3.deal { grid-template-columns: 40px 114px 1fr; }
    .c3.fc { grid-template-columns: 100px 46px 1fr; }
    .c3.rt { grid-template-columns: 110px 30px 1fr; }
    .t2 { display: grid; grid-template-columns: 46px 1fr; height: 21px; line-height: 21px; overflow: hidden; }
    .t2 .e { overflow: hidden; text-overflow: ellipsis; color: #a8a8a8; }
    .frm { justify-content: flex-start; padding-top: 4px; }

    /* floating things */
    .mark { position: absolute; left: 2411px; top: 12px; font-size: 33px; line-height: 40px; font-weight: 700; color: rgba(150, 150, 150, 0.42); white-space: nowrap; transform: scaleY(1.15); transform-origin: top left; }
    .box { position: absolute; left: 2463px; top: 267px; width: 92px; height: 360px; background: #fff; padding-top: 29px; }
    .box .cl { position: absolute; right: 1px; top: 7px; width: 19px; height: 19px; background: #c0504d; color: #fff; text-align: center; line-height: 18px; font-size: 12px; font-weight: 700; }
    .box .ic { display: grid; grid-template-columns: repeat(4, 23px); grid-auto-rows: 22px; }
    .box svg { display: block; width: 23px; height: 22px; font-family: "Liberation Sans", "Noto Sans CJK SC", sans-serif; }
    .lyr { position: absolute; font-size: 32px; font-weight: 700; color: #0a92dc; white-space: nowrap; line-height: 34px; }
    .lyr.a { left: 703px; top: 1279px; }
    .lyr.b { left: 1421px; top: 1334px; color: #0a78c0; }
    .net { position: absolute; left: 2388px; top: 1263px; width: 115px; height: 40px; border-radius: 20px; background: rgba(70, 70, 75, 0.55); font-size: 11px; color: #ddd; line-height: 20px; padding-left: 10px; }
    .net span { display: block; padding-left: 14px; position: relative; }
    .net em { position: absolute; left: 0; top: 0; font-style: normal; }
    .net .rx { color: #4aa8ff; }
    .net .tx { color: #2fc050; }
    .net small { color: #999; font-size: 9px; }
    .gauge { position: absolute; left: 2447px; top: 1254px; width: 56px; height: 56px; border-radius: 50%; background: rgba(60, 62, 68, 0.92); color: #eee; text-align: center; line-height: 54px; font-size: 24px; border: 2px solid #434850; border-top-color: #3cc8a8; border-right-color: #3cc8a8; }
    .gauge small { font-size: 10px; }
    .toast { position: absolute; left: 2383px; top: 1353px; width: 177px; height: 6px; background: #f4f4f4; border-radius: 4px 0 0 0; }
    .toast i { display: block; width: 26px; height: 6px; background: #e8501a; border-radius: 8px 8px 0 0; }
  `;

  private cell(v: string, kind: string) {
    if (v === "-") return html`<div class="w">–</div>`;
    const cls = kind === "s" ? (v.startsWith("-") ? "g" : "r") : kind;
    return html`<div class=${cls}>${v}</div>`;
  }

  private unit(v: string) {
    const m = v.match(/^(.*?)([万亿])$/);
    return m ? html`${m[1]}<span class="u">${m[2]}</span>` : v;
  }

  private renderSide() {
    return html`<aside class="side">
      <div class="side-tabs"><div class="on">自选股</div><div>最近浏览</div></div>
      <div class="side-body">
        <div>
          ${sideRows.map(([n, c, p, d, pc, k]) => html`
            <div class="srow ${k === "s" ? "sel" : ""}">
              <div><div class="name">${n}</div><div class="code">${c}</div></div>
              <div class="pr ${k === "g" ? "g" : "r"}">${p}</div>
              <div class="ch ${k === "g" ? "g" : "r"}">${d}<br />${pc}</div>
            </div>`)}
        </div>
        <div class="side-scroll"><div class="up">▲</div><div class="down">▼</div></div>
      </div>
    </aside>`;
  }

  private renderCenter() {
    return html`<main class="center">
      <div class="toolbar">
        <i class="panel-ico"></i>
        <div class="periods">${periods.map((p) => html`<span class=${p === "日线" ? "on" : ""}>${p}</span>`)}</div>
        <div class="tools">${tools.map((t) => html`<div>${t}</div>`)}</div>
      </div>
      <div class="pane">
        <svg class="plot" viewBox="201 23 1905 780">
          <line class="axis-line" x1="2056.5" x2="2056.5" y1="23" y2="804"></line>
          <path d="M2027 28l4 5-4 5-4-5z" fill="none" stroke="#777"></path>
          <rect x="2041.5" y="28.5" width="10" height="10" rx="2" fill="none" stroke="#888"></rect>
          <rect x="2047" y="29" width="4" height="9" fill="#888"></rect>
          ${chartSvg}
          <rect x="2056.5" y="608.5" width="50" height="15" fill="#000080" stroke="#d00000"></rect>
          <text x="2062" y="620" fill="#d8d8d8" font-size="12.5">31.45</text>
        </svg>
        <div class="pane-title">兆威机电(日线,前复权)<i></i></div>
      </div>
      <div class="pane vol">
        <svg class="plot" viewBox="201 804 1905 260">
          <line class="axis-line" x1="2056.5" x2="2056.5" y1="804" y2="1064"></line>
          ${volSvg}
        </svg>
      </div>
      <div class="dates">
        <div class="d y0">2022年</div><div class="d m5">5</div><div class="d m6">6</div><div class="d m7">7</div>
        <div class="d cur">--</div><div class="pad"></div><div class="dl">日线</div>
        <svg class="date-ticks" viewBox="201 1065 1905 15" width="1905" height="15">
          ${[499, 653, 808, 1132, 1304, 1474, 1799].map((x) => svg`<line x1=${x + 0.5} x2=${x + 0.5} y1="1065" y2="1068" stroke="#ff3232"></line>`)}
        </svg>
      </div>
      <div class="inds">
        ${indicators.map(([t, w, k]) => html`<div class=${k ?? ""} style="width:${w}px">${t}</div>`)}
        <div class="gap"></div>
        ${indRight.map(([t, w]) => html`<div style="width:${w}px">${t}</div>`)}
      </div>
      <div class="tbl-wrap">
        <div class="tbl-col">
          <div class="tbl">
            <div class="tr th">
              <div class="n"><svg viewBox="0 0 14 14" width="14" height="14"><circle cx="7" cy="7" r="3.5" fill="none" stroke="#777" stroke-width="3"></circle><circle cx="7" cy="7" r="6" fill="none" stroke="#777" stroke-width="2" stroke-dasharray="2.5 2.2"></circle></svg></div>
              <div class="nm"><span>名称(12)</span><span>•</span></div>
              ${headers.map((h, i) => html`<div>${h}${i === 0 ? html`<span class="arr">↑</span>` : ""}</div>`)}
            </div>
            ${stockRows.map(([n, t, vals], i) => html`
              <div class="tr">
                <div class="n">${i + 1}</div>
                <div class="nm">${n}<small>${t}</small></div>
                ${vals.map((v, j) => this.cell(v, colKind[j]))}
              </div>`)}
          </div>
          <div class="rels">
            <div class="on" style="width:73px">关联品种</div>
            ${relTabs.map(([t, w]) => html`<div style="width:${w}px">${t}</div>`)}
          </div>
        </div>
        <div class="scr"><div class="up">▲</div><div class="thumb"></div><div class="sp"></div><div class="down">▼</div></div>
      </div>
      <div class="bar">
        <div class="fold w">扩展∨</div>
        <div class="a1">关联报价</div>
        <div class="a2 y">短线基因</div>
        <div class="a3 r">财富圈</div>
        <div class="gap"></div>
        <div class="b1 w">新用户福利专享</div>
        <div class="b2 y">图文<span class="w">F10</span></div>
        <div class="b3 w">侧边栏»</div>
      </div>
    </main>`;
  }

  private renderMid() {
    const level = ([p, w, v]: [string, number, string]) => html`
      <div class="lvl"><span class="r">${p}</span><div><i style="width:${w}px"></i></div><span class="y">${this.unit(v)}</span></div>`;
    const qrow = ([a, b, k, c, d, k2]: string[]) => html`
      <div class="qr"><span>${a}</span><b class=${k}>${this.unit(b)}</b><span>${c}</span><b class=${k2}>${this.unit(d)}</b></div>`;
    return html`<section class="mid">
      <div class="mhead"><small>1000</small><b>003021</b><span>兆威机电</span></div>
      <div class="book">${asks.map(level)}</div>
      <div class="book b2">${bids.map(level)}</div>
      <div class="quo">${quotes.map(qrow)}</div>
      <div class="quo">${capital.map(qrow)}</div>
      <div class="ad">仅需20元查看千档行情</div>
      <div class="stat">交易状态: 盘中休市 11:30:00</div>
      <div>
        ${ticks.map(([t, p, v, s, n, e]) => html`
          <div class="tk ${e ? "end" : ""}">
            <span class="tm w">${t === "-" ? "" : t}</span>
            <span class="r">${p}</span>
            <span class="y">${v}<span class="u">万</span></span>
            <span class="side-flag ${s === "S" ? "g" : "r"}">${s === "_" ? "" : s}</span>
            <span class="w">${n}</span>
          </div>`)}
      </div>
      <div class="tabs">
        ${["笔", "价", "细", "势", "联", "值", "主", "筹"].map((t, i) => html`<div class=${i === 0 ? "on" : ""}>${t}</div>`)}
      </div>
    </section>`;
  }

  private renderInfo() {
    const metric = (a: unknown, b: string, c: string, d: string) => html`
      <div class="m"><span class="lb">${a}</span><span class="v">${b}</span><span class="lb2">${c}</span><span class="v">${d}</span></div>`;
    const finBars = [[2394, 122], [2403, 102], [2411, 98], [2419, 102], [2448, 121], [2456, 123], [2464, 124], [2472, 148], [2501, 142]];
    return html`<section class="info">
      <div class="btns">
        <div class="buy">闪电买入</div><div class="sell">闪电卖出</div><div>一键全撤</div><div>委托查询</div>
      </div>
      <div class="sec hd"><span>003021</span><nav><a>单季</a><span>同季</span><span>财报</span><span>更多..</span></nav></div>
      <div class="sec fin">
        <svg viewBox="2341 79 219 106" width="219" height="106">
          <path d="M2383.5 90v75h161" fill="none" stroke="#444"></path>
          ${finBars.map(([x, y]) => svg`<rect x=${x} y=${y} width="6.5" height=${165 - y} fill="#ff4400"></rect>`)}
          ${[["7.91", 95], ["5.93", 114], ["3.95", 133], ["1.98", 151], ["0.00", 170]].map(([t, y]) => svg`<text x="2379" y=${y} text-anchor="end">${t}</text>`)}
          ${[["2020", 2396], ["2021", 2449], ["2022", 2502]].map(([t, x]) => svg`<text x=${x} y="180">${t}</text>`)}
          <text x="2475" y="94">净利润(千万)</text>
        </svg>
      </div>
      <div class="sec">
        ${metric("总收入", "2.15亿", "同比%", "-17.30")}
        ${metric("净利润", "2269万", "同比%", "-50.11")}
        ${metric("非经损", "121万", "销售费", "855万")}
        ${metric("货币金i", "2.23亿", "应收款", "2.20亿")}
        <div class="more">∨</div>
      </div>
      <div class="sec">
        ${metric(html`PE<sup> TTM</sup>`, "61.9", "PB", "")}
        ${metric(html`PEG<sup>i</sup>`, "-2.21", "PS", "")}
        ${metric("毛利率", "26.71", "净", "")}
        ${metric(html`ROE<sup> ①</sup>`, "0.80%", "负", "")}
      </div>
      <div class="sec">
        ${metric("20日i", "0.3%", "今", "")}
        ${metric("60日", "33.1%", "Be", "")}
        ${metric("年最高", "85.30", "年", "")}
        ${metric("总市值i", "77.19亿", "流", "")}
      </div>
      <div class="sec">
        ${metric("股东", "22-03-", "", "")}
        ${metric("户数", "1.25", "", "")}
        ${metric("较上期", "58.87", "", "")}
      </div>
      <div class="sec"><div class="ln">2022年中报于8月2</div><div class="ln">7月13日 深股通,无</div></div>
      <div class="sec"><div class="ln">7月12日14:37跌停</div><div class="ln">7月08日10:24涨停</div></div>
      <div class="sec top frm">
        <div class="ln sb"><span class="lb">眼光</span><span class="eye"><span class="lb">今日</span><span class="bl">本周</span><span class="lb">本月</span><span class="lb">本年</span></span></div>
        <div class="ln sb"><span><span class="bull">看多</span> 16人</span><span>4人 <span class="bear">看空</span></span></div>
        <div class="vote">
          <div class="up-b"><svg viewBox="0 0 18 18"><circle cx="9" cy="9" r="9" fill="#fff"></circle><path d="M5 9h2v5H5zM8 9l2-4c1 0 1.5 1 1 3h2.5l-1 6H8z" fill="none" stroke="#d9274a"></path></svg>80%</div>
          <div class="dn-b">20%<svg viewBox="0 0 18 18"><circle cx="9" cy="9" r="9" fill="#fff"></circle><path d="M13 9h-2V4h2zM10 9l-2 4c-1 0-1.5-1-1-3H4.5l1-6H10z" fill="none" stroke="#35a53a"></path></svg></div>
        </div>
      </div>
      <div class="sec">
        ${[["基金", "3家", "319万股", "5.3%"], ["保险", "2家", "288万股", "4.8%"], ["社保", "2家", "162万股", "2.7%"], ["法人1", "1家", "1760万股", "29.2%"], ["北上", "1家", "119万股", "2.0%"]].map(
          ([a, b, c, d]) => html`<div class="h4"><span class="lb">${a}<sup> ①</sup></span><span>${b}</span><span>${c}</span><span>${d}</span></div>`
        )}
      </div>
      <div class="sec">
        <div class="c3 hold lb"><span>日期</span><span>增减持均价</span><span>持股变动</span></div>
        <div class="c3 hold"><span>06-28</span><span>47.50</span><span>-71.30万</span></div>
        <div class="c3 hold"><span>06-27</span><span>47.62</span><span>-171万</span></div>
      </div>
      <div class="sec"><div class="ln sb"><span><span class="lb">分红</span>&nbsp; 1.41亿(2)</span><span><span class="lb">募资</span>&nbsp; 20.25亿(3)</span></div></div>
      <div class="sec">
        <div class="t2 lb"><span>日期</span><span>异动类型</span></div>
        <div class="t2"><span>06-02</span><span class="e">连续三个交易日内涨幅偏离值累计</span></div>
      </div>
      <div class="sec">
        <div class="c3 deal lb"><span>日期</span><span>大宗交易成交价</span><span>成交额</span></div>
        <div class="c3 deal"><span>06-28</span><span>47.50</span><span>632万</span></div>
        <div class="c3 deal"><span>06-28</span><span>47.50</span><span>2755万</span></div>
      </div>
      <div class="sec">
        ${[["公司", "深圳市兆威机电股份有限公司"], ["控股", "李海周,谢燕玲"], ["主营", "从事微型传动系统、精密注塑件"], ["地位", "掌握了四种主要的齿轮生产技术"]].map(
          ([a, b]) => html`<div class="t2"><span class="lb">${a}</span><span class="e">${b}</span></div>`
        )}
      </div>
      <div class="sec"><div class="ln mid-t"><a>预测评级</a> 主题投资 选股策略 i</div></div>
      <div class="sec">
        <div class="c3 fc lb"><span>年份</span><span>每股收益</span><span>年度PE</span></div>
        ${[["2021(实际)", "0.86", "52.32"], ["2022(预测)", "1.01", "40.15"], ["2023(预测)", "1.52", "26.60"], ["2024(预测)", "2.11", "19.80"]].map(
          ([a, b, c]) => html`<div class="c3 fc"><span>${a}</span><span>${b}</span><span>${c}</span></div>`
        )}
      </div>
      <div class="sec top frm">
        <div class="c3 rt lb"><span>日期</span><span>评级</span><span>研究机构</span></div>
        ${[["2022-06-20", "增持", "兴业证券"], ["2022-04-30", "增持", "中金公司"], ["2022-04-20", "买入", "西部证券"], ["2022-04-20", "增持", "中金公司"]].map(
          ([a, b, c]) => html`<div class="c3 rt"><span>${a}</span><span>${b}</span><span>${c}</span></div>`
        )}
      </div>
    </section>`;
  }

  render() {
    return html`
      <div class="edge"></div>
      <div class="app">${this.renderSide()}${this.renderCenter()}${this.renderMid()}${this.renderInfo()}</div>
      <div class="foot"></div>
      <div class="mark">股海明灯</div>
      <div class="box">
        <div class="cl">x</div>
        <div class="ic">${toolIcons.map((i) => html`<svg viewBox="0 0 23 22">${i}</svg>`)}</div>
      </div>
      <div class="lyr a">爱恨不辜负</div>
      <div class="lyr b">时光变幻了面目</div>
      <div class="net"><span><em class="rx">↑</em>0.1 <small>K/s</small></span><span><em class="tx">↓</em>0.7 <small>K/s</small></span></div>
      <div class="gauge">25<small>%</small></div>
      <div class="toast"><i></i></div>
    `;
  }
}
